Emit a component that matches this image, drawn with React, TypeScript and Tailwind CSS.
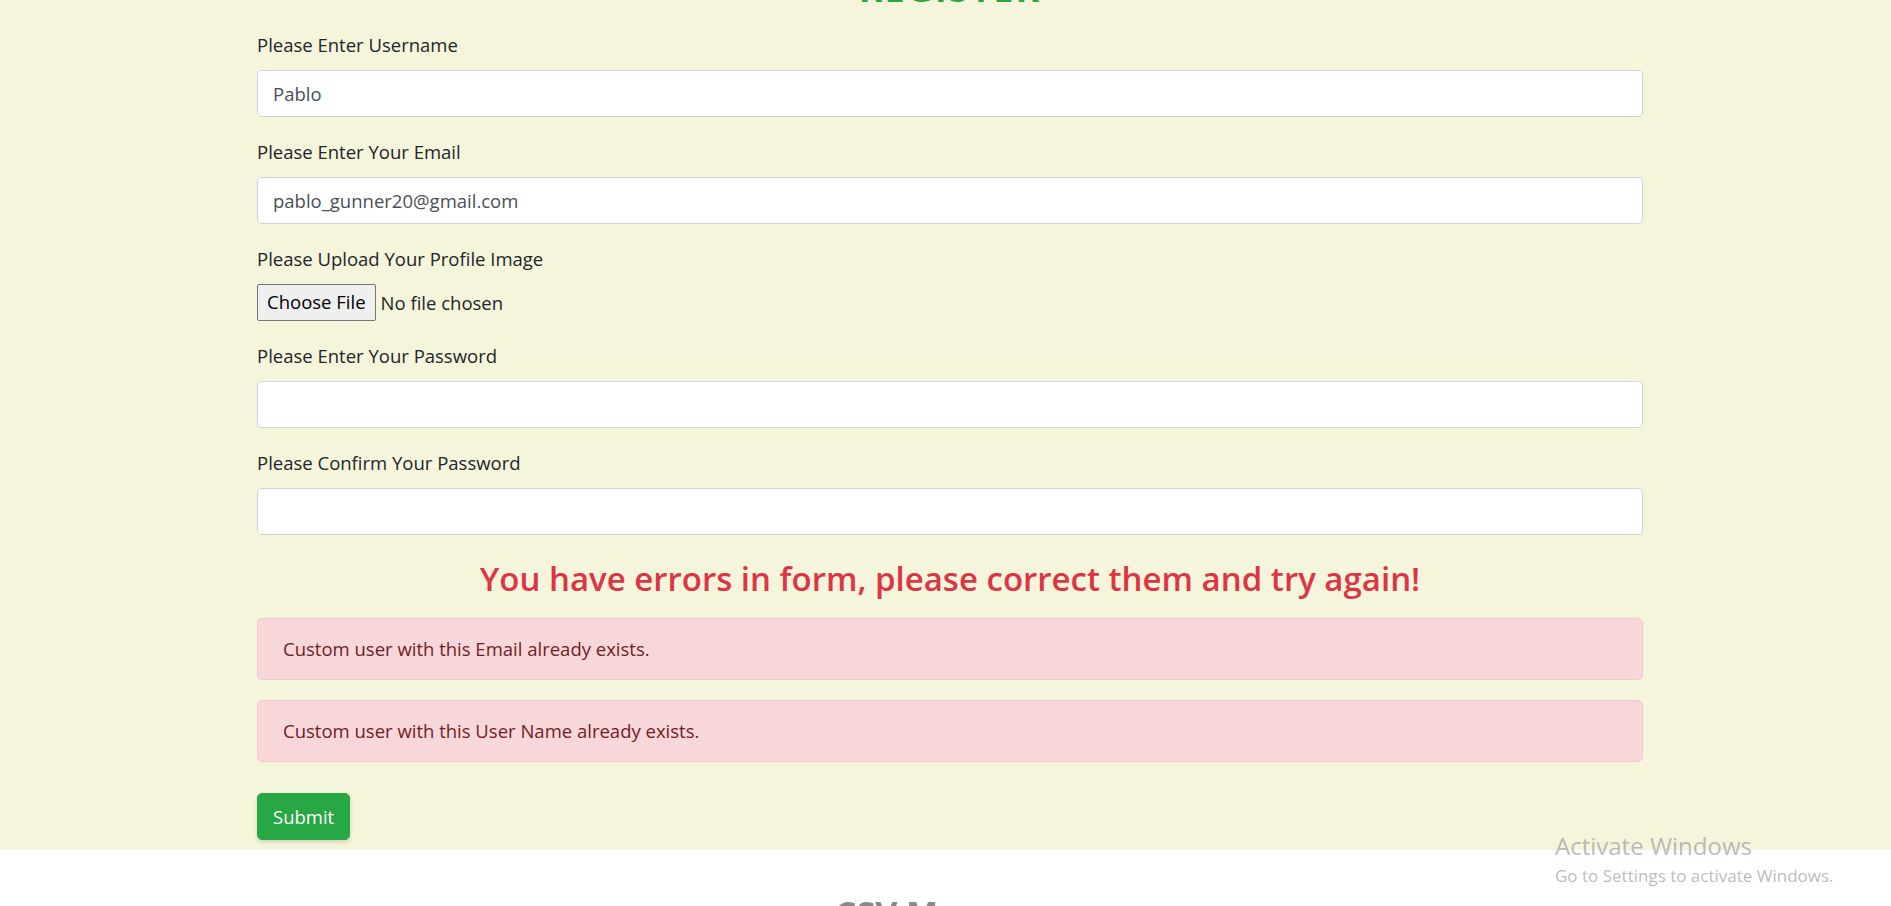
import React from 'react';

const font = "font-['Open_Sans','Noto_Sans','Liberation_Sans',sans-serif]";

interface FieldProps {
  label: string;
  value?: string;
  type?: string;
}

const Field: React.FC<FieldProps> = ({ label, value = '', type = 'text' }) => (
  <div className="mb-[20px]">
    <label className="mb-[10px] block text-[18.5px] leading-[30px] text-[#212529]">{label}</label>
    <input
      type={type}
      defaultValue={value}
      className="block h-[47px] w-full rounded-[5px] border border-[#ced4da] bg-white px-[15px] text-[18.5px] text-[#495057] outline-none"
    />
  </div>
);

const Alert: React.FC<{ text: string }> = ({ text }) => (
  <div className="mb-[20px] rounded-[5px] border border-[#f5c6cb] bg-[#f8d7da] px-[25px] py-[15px] text-[18.5px] leading-[30px] text-[#721c24]">
    {text}
  </div>
);

export default function App() {
  return (
    <div className={`relative min-h-screen overflow-hidden bg-white ${font}`}>
      <section className="bg-[#f5f5dc] pb-[10px]">
        <div className="ml-[257px] w-[1386px]">
          <h1 className="-mt-[32px] h-[62px] text-center text-[36px] font-bold leading-[42px] tracking-[2px] text-[#28a745]">
            REGISTER
          </h1>

          <form onSubmit={(e) => e.preventDefault()}>
            <Field label="Please Enter Username" value="Pablo" />
            <Field label="Please Enter Your Email" value="pablo_gunner20@gmail.com" />

            <div className="mb-[20px]">
              <label className="mb-[10px] block text-[18.5px] leading-[30px] text-[#212529]">
                Please Upload Your Profile Image
              </label>
              <div className="flex h-[37px] items-center gap-[5px] text-[18.5px] text-[#212529]">
                <button
                  type="button"
                  className="h-[37px] rounded-[2px] border border-[#767676] bg-[#efefef] px-[9px] text-[18.5px] leading-none text-black"
                >
                  Choose File
                </button>
                <span>No file chosen</span>
              </div>
            </div>

            <Field label="Please Enter Your Password" type="password" />
            <Field label="Please Confirm Your Password" type="password" />

            <h3 className="mb-[18px] mt-[23px] text-center text-[33px] font-semibold leading-[42px] text-[#dc3545]">
              You have errors in form, please correct them and try again!
            </h3>

            <Alert text="Custom user with this Email already exists." />
            <Alert text="Custom user with this User Name already exists." />

            <button
              type="submit"
              className="mt-[11px] h-[47px] rounded-[5px] border border-[#28a745] bg-[#28a745] px-[15px] text-[18.5px] text-white shadow-[0_2px_4px_rgba(0,0,0,0.15)]"
            >
              Submit
            </button>
          </form>
        </div>
      </section>

      <footer className="bg-white pt-[42px]">
        <h2 className="text-center text-[34px] font-bold leading-[43px] text-[#8a8a8a]">CSV Manager</h2>
      </footer>

      <div className="pointer-events-none absolute left-[1555px] top-[829px] text-[#9e9e9e]/70">
        <div className="text-[24px] leading-[34px]">Activate Windows</div>
        <div className="text-[17px] leading-[26px]">Go to Settings to activate Windows.</div>
      </div>
    </div>
  );
}
